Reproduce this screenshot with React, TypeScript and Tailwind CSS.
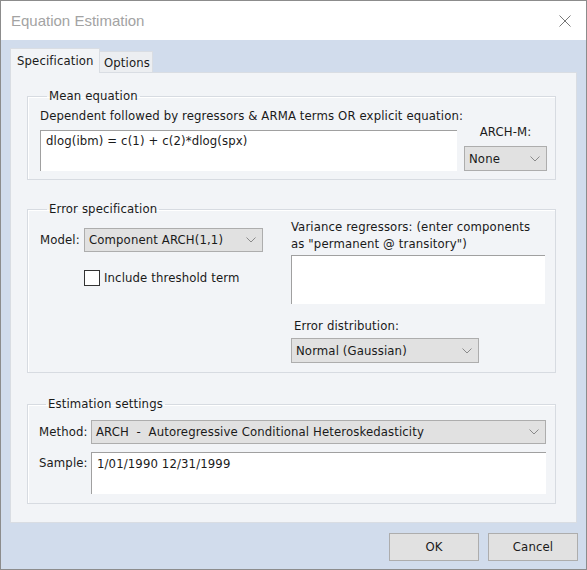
import React from "react";

const font = "font-['DejaVu_Sans_Condensed','Liberation_Sans',sans-serif]";

function Chevron() {
  return (
    <svg width="10" height="6" viewBox="0 0 10 6" className="shrink-0">
      <polyline points="0.5,0.5 5,5 9.5,0.5" fill="none" stroke="#8a8a8a" strokeWidth="1" />
    </svg>
  );
}

function Select({ value, className }: { value: string; className: string }) {
  return (
    <div
      className={`flex items-center justify-between bg-[#e1e1e1] border border-[#adadad] pl-[4px] pr-[6px] text-[#1a1a1a] ${className}`}
    >
      <span>{value}</span>
      <Chevron />
    </div>
  );
}

function Box({ text, className }: { text?: string; className: string }) {
  return (
    <div className={`bg-white border-t border-l border-[#a0a0a0] pl-[5px] pt-[2px] leading-[16px] ${className}`}>
      {text}
    </div>
  );
}

function Group({ title, className, children }: { title: string; className: string; children: React.ReactNode }) {
  return (
    <fieldset className={`border border-[#d7dbe1] shadow-[inset_1px_1px_0_#fff] ${className}`}>
      <legend className="ml-[7px] px-[2px] leading-[16px]">{title}</legend>
      {children}
    </fieldset>
  );
}

export default function App() {
  return (
    <div className={`w-[587px] h-[570px] flex flex-col border border-[#8c8c8c] bg-[#d1dcec] text-[13px] leading-[16px] tracking-[0.12px] text-[#1a1a1a] ${font}`}>
      {/* title bar */}
      <div className="h-[39px] shrink-0 bg-white flex items-center justify-between pl-[10px] pr-[15px]">
        <span className="text-[15px] tracking-normal text-[#a3a3a3] font-['Liberation_Sans',sans-serif]">Equation Estimation</span>
        <svg width="12" height="12" viewBox="0 0 12 12">
          <path d="M0.5 0.5 L11.5 11.5 M11.5 0.5 L0.5 11.5" stroke="#777" strokeWidth="1" />
        </svg>
      </div>

      <div className="flex-1 flex flex-col px-[9px] pt-[8px]">
        {/* tabs */}
        <div className="h-[24px] flex items-end">
          <div className="h-[25px] -mb-[1px] w-[90px] bg-[#f2f4f7] border border-b-0 border-[#d9dde3] pl-[6px] pt-[4px] relative z-10">
            Specification
          </div>
          <div className="h-[21px] w-[53px] bg-[#eceef1] border border-b-0 border-l-0 border-[#d9dde3] pl-[4px] pt-[3px]">
            Options
          </div>
        </div>

        {/* panel */}
        <div className="h-[451px] bg-[#f2f4f7] border border-[#d9dde3] pl-[16px] pr-[20px] pt-[15px]">
          <Group title="Mean equation" className="pl-[12px] pr-[8px] pb-[8px]">
            <div className="mt-[4px]">Dependent followed by regressors &amp; ARMA terms OR explicit equation:</div>
            <div className="flex items-end justify-between">
              <Box text="dlog(ibm) = c(1) + c(2)*dlog(spx)" className="w-[417px] h-[41px]" />
              <div className="flex flex-col items-center">
                <span className="mb-[6px]">ARCH-M:</span>
                <Select value="None" className="w-[83px] h-[25px]" />
              </div>
            </div>
          </Group>

          <Group title="Error specification" className="mt-[21px] pl-[12px] pr-[10px] pb-[9px]">
            <div className="flex">
              <div className="w-[251px] pt-[11px]">
                <div className="flex items-center">
                  <span className="w-[44px]">Model:</span>
                  <Select value="Component ARCH(1,1)" className="w-[179px] h-[24px]" />
                </div>
                <div className="flex items-center ml-[44px] mt-[18px]">
                  <div className="w-[16px] h-[16px] bg-white border border-[#333]" />
                  <span className="ml-[4px]">Include threshold term</span>
                </div>
              </div>
              <div className="flex-1">
                <div className="leading-[17px] pt-[1px]">
                  Variance regressors: (enter components
                  <br />
                  as "permanent @ transitory")
                </div>
                <Box className="w-[254px] h-[49px] mt-[3px]" />
                <div className="ml-[3px] mt-[14px]">Error distribution:</div>
                <Select value="Normal (Gaussian)" className="w-[188px] h-[25px] mt-[4px]" />
              </div>
            </div>
          </Group>

          <Group title="Estimation settings" className="mt-[23px] pl-[11px] pr-[9px] pb-[9px]">
            <div className="flex items-center mt-[8px]">
              <span className="w-[52px]">Method:</span>
              <Select value="ARCH  -  Autoregressive Conditional Heteroskedasticity" className="flex-1 h-[24px] whitespace-pre" />
            </div>
            <div className="flex items-start mt-[8px]">
              <span className="w-[52px] pt-[3px]">Sample:</span>
              <Box text="1/01/1990 12/31/1999" className="flex-1 h-[42px] pt-[3px]" />
            </div>
          </Group>
        </div>

        {/* buttons */}
        <div className="flex justify-end gap-[9px] mt-[10px] -mr-[1px]">
          <div className="w-[90px] h-[28px] bg-[#e1e1e1] border border-[#adadad] flex items-center justify-center">OK</div>
          <div className="w-[90px] h-[28px] bg-[#e1e1e1] border border-[#adadad] flex items-center justify-center">Cancel</div>
        </div>
      </div>
    </div>
  );
}
